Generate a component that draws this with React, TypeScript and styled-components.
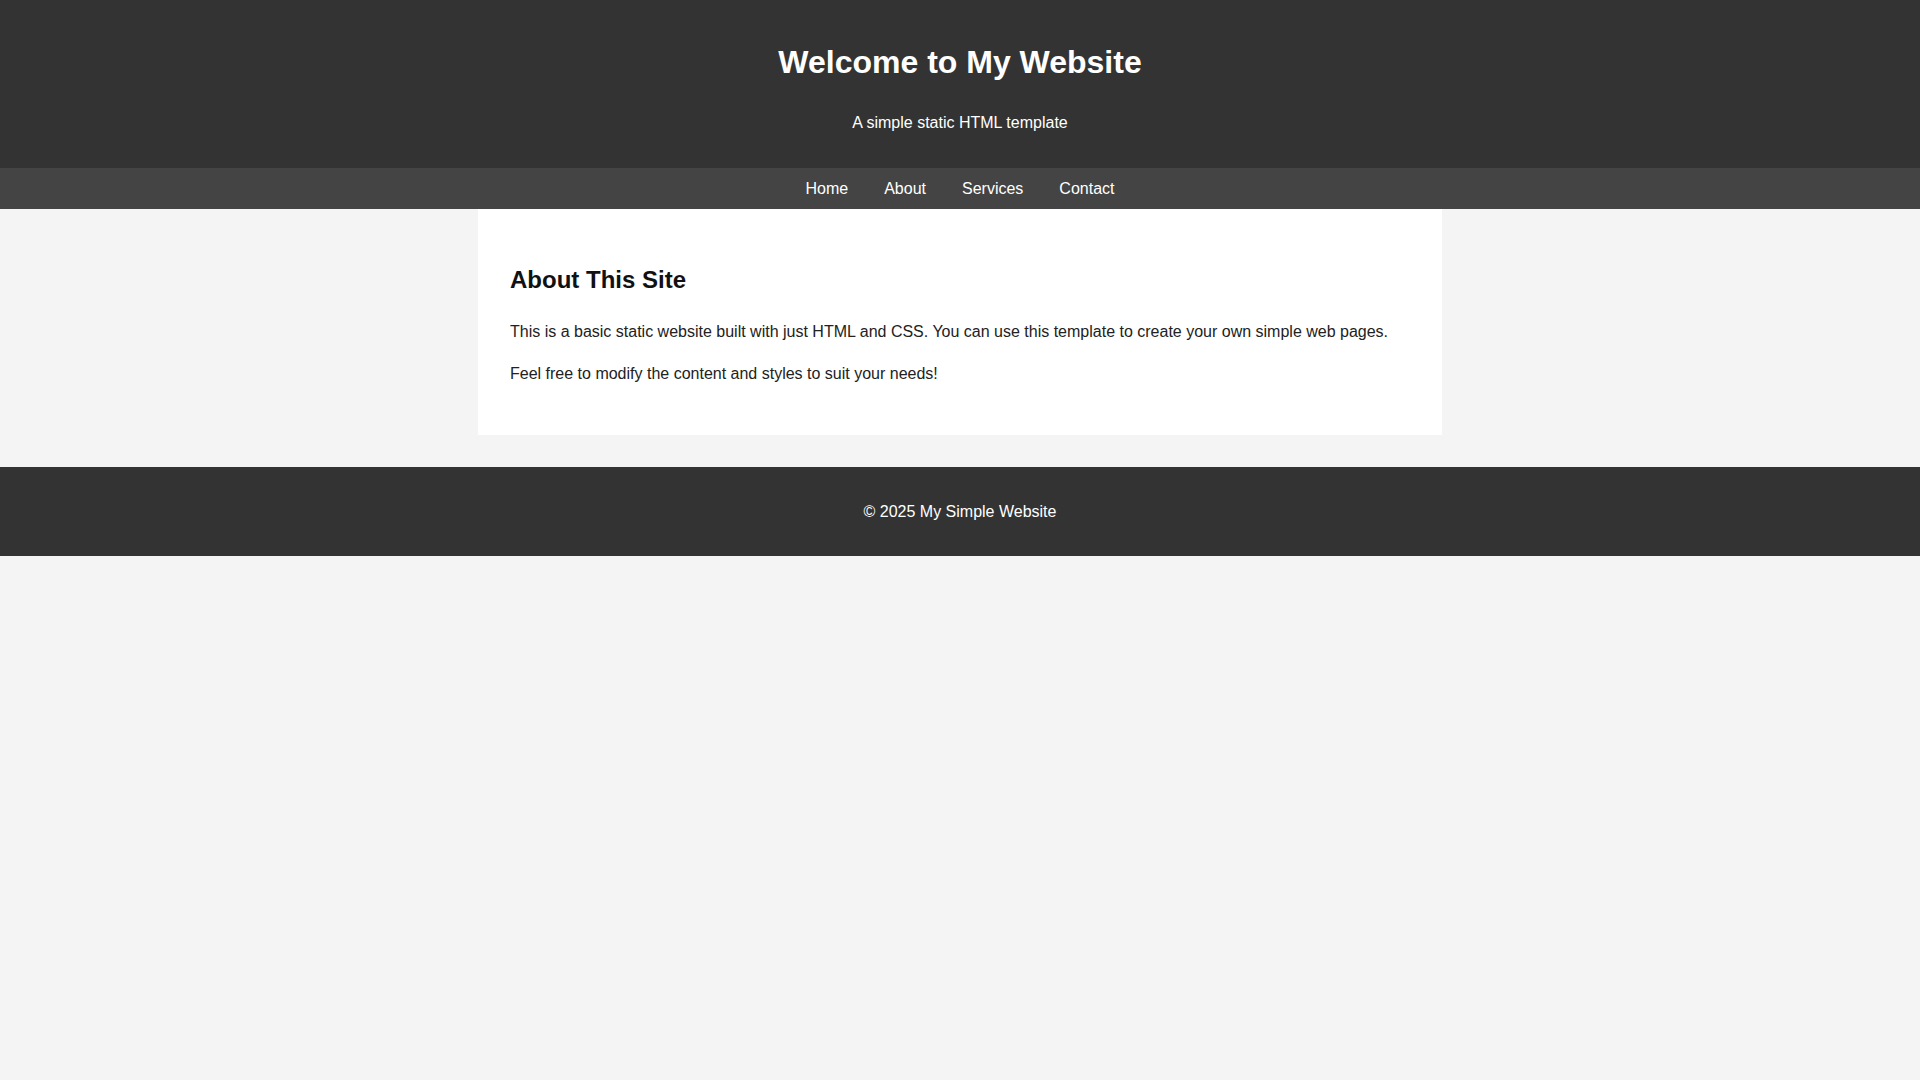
import React from 'react';
import styled, { createGlobalStyle } from 'styled-components';

const GlobalStyle = createGlobalStyle`
  body {
    margin: 0;
    font-family: 'Liberation Sans', Arial, sans-serif;
    line-height: 1.6;
    background: #f4f4f4;
    color: #222;
  }
`;

const Header = styled.header`
  background: #333;
  color: #fff;
  text-align: center;
  padding: 1rem;
`;

const SiteTitle = styled.h1`
  font-size: 2em;
  margin: 0.67em 0;
`;

const Tagline = styled.p`
  margin: 1em 0;
`;

const Nav = styled.nav`
  background: #444;
  padding: 0.5rem 0;
  display: flex;
  justify-content: center;
  gap: 4px;
`;

const NavLink = styled.a`
  color: #fff;
  text-decoration: none;
  padding: 0 1rem;
`;

const Main = styled.main`
  max-width: 900px;
  margin: 0 auto 2rem;
  padding: 2rem;
  background: #fff;
`;

const SectionTitle = styled.h2`
  font-size: 1.5em;
  margin: 0.83em 0;
  color: #111;
`;

const Paragraph = styled.p`
  margin: 1em 0;
`;

const Footer = styled.footer`
  background: #333;
  color: #fff;
  text-align: center;
  padding: 1rem;
`;

const FooterText = styled.p`
  margin: 1em 0;
`;

const links = ['Home', 'About', 'Services', 'Contact'];

export default function App(): JSX.Element {
  return (
    <>
      <GlobalStyle />
      <Header>
        <SiteTitle>Welcome to My Website</SiteTitle>
        <Tagline>A simple static HTML template</Tagline>
      </Header>
      <Nav>
        {links.map((link) => (
          <NavLink key={link} href="#">
            {link}
          </NavLink>
        ))}
      </Nav>
      <Main>
        <SectionTitle>About This Site</SectionTitle>
        <Paragraph>
          This is a basic static website built with just HTML and CSS. You can use this template to create your own
          simple web pages.
        </Paragraph>
        <Paragraph>Feel free to modify the content and styles to suit your needs!</Paragraph>
      </Main>
      <Footer>
        <FooterText>&copy; 2025 My Simple Website</FooterText>
      </Footer>
    </>
  );
}
